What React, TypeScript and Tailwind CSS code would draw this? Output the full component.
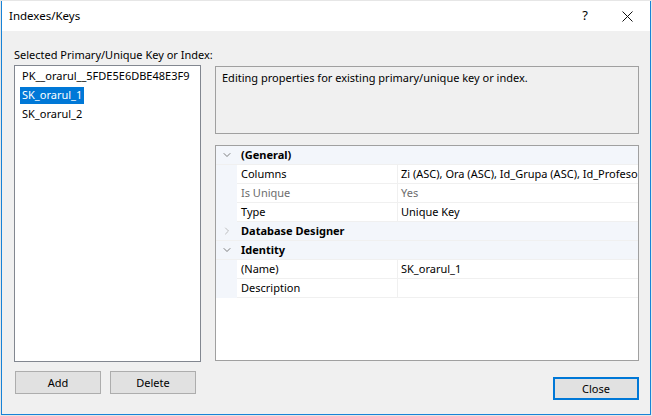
import { ChevronDown, ChevronRight } from "lucide-react";

const font = { fontFamily: '"Noto Sans", "Open Sans", sans-serif' };

type Row =
  | { kind: "cat"; label: string; open: boolean }
  | { kind: "prop"; name: string; value: string; muted?: boolean };

const rows: Row[] = [
  { kind: "cat", label: "(General)", open: true },
  { kind: "prop", name: "Columns", value: "Zi (ASC), Ora (ASC), Id_Grupa (ASC), Id_Profesor (ASC)" },
  { kind: "prop", name: "Is Unique", value: "Yes", muted: true },
  { kind: "prop", name: "Type", value: "Unique Key" },
  { kind: "cat", label: "Database Designer", open: false },
  { kind: "cat", label: "Identity", open: true },
  { kind: "prop", name: "(Name)", value: "SK_orarul_1" },
  { kind: "prop", name: "Description", value: "" },
];

function PropGrid() {
  return (
    <div className="h-[216px] border border-[#a0a0a0] bg-white overflow-hidden">
      {rows.map((r, i) =>
        r.kind === "cat" ? (
          <div key={i} className="flex h-[19px] items-center bg-[#f3f6fb] border-b border-[#f0f0f0]">
            <div className="w-[21px] flex justify-center">
              {r.open ? (
                <ChevronDown className="w-3 h-3 text-[#555]" strokeWidth={1.5} />
              ) : (
                <ChevronRight className="w-3 h-3 text-[#aaa]" strokeWidth={1.5} />
              )}
            </div>
            <span className="pl-[4px] font-bold text-black">{r.label}</span>
          </div>
        ) : (
          <div key={i} className="flex h-[19px] bg-[#f3f6fb]">
            <div className="w-[21px] shrink-0" />
            <div
              className={`w-[161px] shrink-0 pl-[4px] flex items-center bg-white border-b border-r border-[#f0f0f0] whitespace-nowrap ${
                r.muted ? "text-[#6d6d6d]" : "text-black"
              }`}
            >
              {r.name}
            </div>
            <div
              className={`flex-1 min-w-0 pl-[3px] flex items-center bg-white border-b border-[#f0f0f0] whitespace-nowrap overflow-hidden ${
                r.muted ? "text-[#6d6d6d]" : "text-black"
              }`}
            >
              {r.value}
            </div>
          </div>
        )
      )}
    </div>
  );
}

function WinButton({ label, primary }: { label: string; primary?: boolean }) {
  return (
    <button
      className={`w-[86px] h-[23px] bg-[#e1e1e1] text-black leading-none ${
        primary ? "border-2 border-[#0078d7]" : "border border-[#adadad]"
      }`}
    >
      {label}
    </button>
  );
}

export default function App() {
  return (
    <div className="w-[652px] h-[416px] bg-[#e6e6e6] pl-px pr-px pt-px text-[11px]" style={font}>
      <div className="w-[650px] h-[414px] flex flex-col border-x border-b border-[#1883d7] bg-[#f0f0f0]">
        {/* Title bar */}
        <div className="h-[30px] bg-white flex items-center pl-[7px] shrink-0">
          <span className="text-black text-[11.5px]">Indexes/Keys</span>
          <span className="ml-auto mr-[34px] text-[13px] text-black">?</span>
          <svg width="11" height="11" viewBox="0 0 11 11" className="mr-[17px]">
            <path d="M0.5 0.5 L10.5 10.5 M10.5 0.5 L0.5 10.5" stroke="#111" strokeWidth="1" />
          </svg>
        </div>

        {/* Body */}
        <div className="flex-1 pl-[12px] pr-[11px] pt-[14px]">
          <div className="h-[20px] text-black leading-[20px]">Selected Primary/Unique Key or Index:</div>
          <div className="flex gap-[14px]">
            {/* Left column */}
            <div className="w-[187px] shrink-0 flex flex-col">
              <div className="h-[297px] border border-[#828790] bg-white pt-[2px] pl-[5px] flex flex-col gap-[2px]">
                <div className="h-[17px] flex items-center px-[2px] text-black whitespace-nowrap">PK__orarul__5FDE5E6DBE48E3F9</div>
                <div className="h-[17px] flex items-center px-[2px] text-white bg-[#0078d7] self-start">SK_orarul_1</div>
                <div className="h-[17px] flex items-center px-[2px] text-black">SK_orarul_2</div>
              </div>
              <div className="flex gap-[9px] mt-[9px] ml-px">
                <WinButton label="Add" />
                <WinButton label="Delete" />
              </div>
            </div>

            {/* Right column */}
            <div className="w-[425px] min-w-0 flex flex-col pt-px">
              <div className="h-[68px] border border-[#a0a0a0] bg-[#f0f0f0] px-[6px] pt-[3px] text-black">
                Editing properties for existing primary/unique key or index.
              </div>
              <div className="mt-[11px]">
                <PropGrid />
              </div>
              <div className="flex justify-end mt-[16px]">
                <WinButton label="Close" primary />
              </div>
            </div>
          </div>
        </div>
      </div>
    </div>
  );
}
